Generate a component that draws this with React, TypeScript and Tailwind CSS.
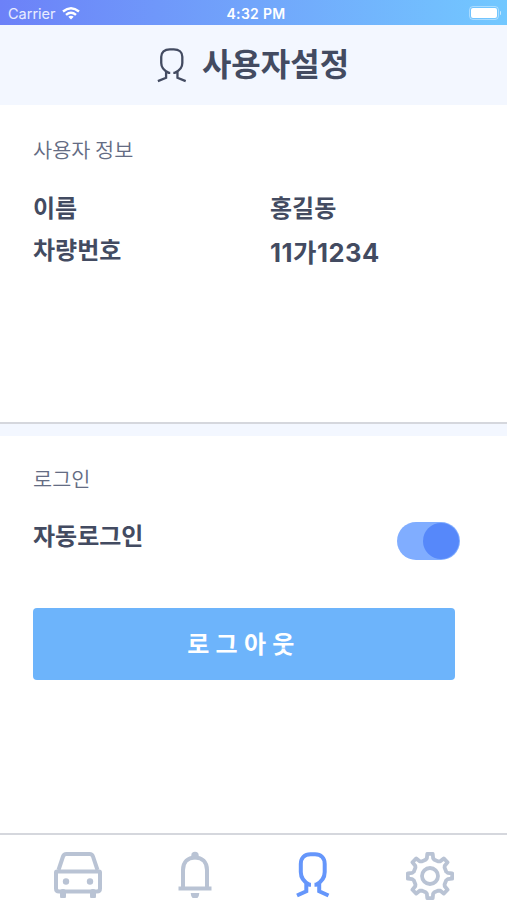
import { useState } from "react";

const PersonIcon = ({ className }: { className?: string }) => (
  <svg viewBox="0 0 34 48" preserveAspectRatio="none" fill="none" stroke="currentColor" className={className}>
    <path
      vectorEffect="non-scaling-stroke"
      d="M15 34.800H13.500C8 32 4.800 27.500 4.800 22V14C4.800 8 8.500 4.300 14.500 4.300H19C25 4.300 28.700 8 28.700 14V22C28.700 27.500 25.500 32 20 34.800H18.500M10.300 33.500V41.300L1 45.500M23.200 33.500V41.300L32.500 45.500"
    />
  </svg>
);

const CarIcon = () => (
  <svg viewBox="0 0 48 48" fill="none" stroke="currentColor" strokeWidth="4" className="h-12 w-12">
    <path d="M4.500 20L9 6.500Q9.800 4 12.500 4H35.500Q38.200 4 39 6.500L43.500 20" />
    <path d="M3 21.500H45Q46 21.500 46 22.500V38.500Q46 41.500 43 41.500H5Q2 41.500 2 38.500V22.500Q2 21.500 3 21.500Z" />
    <path d="M9 42V46M39 42V46" strokeWidth="6" strokeLinecap="round" />
    <circle cx="12" cy="31.500" r="3.200" fill="currentColor" stroke="none" />
    <circle cx="36" cy="31.500" r="3.200" fill="currentColor" stroke="none" />
  </svg>
);

const BellIcon = () => (
  <svg viewBox="0 0 34 48" fill="none" stroke="currentColor" strokeWidth="4" className="h-12 w-[34px]">
    <path d="M5 39V20C5 12 10 7.500 17 7.500S29 12 29 20V39M0.500 38.500H33.500" />
    <circle cx="17" cy="5.500" r="3.700" fill="currentColor" stroke="none" />
    <path d="M12.700 43H21.300Q21 48.800 17 48.800T12.700 43Z" fill="currentColor" stroke="none" />
  </svg>
);

// one tooth as [radius, angle], repeated eight times round the hub
const tooth = [
  [16.800, -15],
  [18, -10],
  [22.300, -7],
  [22.300, 7],
  [18, 10],
  [16.800, 15],
];

const gearPoints = Array.from({ length: 8 }, (_, i) =>
  tooth.map(([r, deg]) => {
    const a = ((deg + i * 45 - 90) * Math.PI) / 180;
    return `${(24 + r * Math.cos(a)).toFixed(2)},${(24 + r * Math.sin(a)).toFixed(2)}`;
  }).join(" ")
).join(" ");

const GearIcon = () => (
  <svg viewBox="0 0 48 48" fill="none" stroke="currentColor" strokeWidth="3.800" strokeLinejoin="round" className="h-12 w-12">
    <polygon points={gearPoints} />
    <circle cx="24" cy="24" r="8" />
  </svg>
);

const StatusBar = () => (
  <div className="grid h-[25px] shrink-0 grid-cols-3 items-center bg-linear-to-r from-[#6c81f8] via-[#71a5fb] to-[#72c8ff] pt-[3px] font-['Inter'] text-[14px] leading-none text-white">
    <div className="flex items-center gap-1.5 pl-2">
      <span className="text-[14.500px] text-white/85">Carrier</span>
      <svg viewBox="0 0 18 13" fill="none" stroke="currentColor" strokeWidth="2.400" className="-mt-0.5 h-[13px] w-[18px]">
        <path d="M1 4.500Q9-2 17 4.500M4 7.800Q9 3.600 14 7.800" />
        <path d="M9 12.500L6.300 9.700Q9 7.600 11.700 9.700Z" fill="currentColor" stroke="none" />
      </svg>
    </div>
    <span className="pl-[5px] text-center font-semibold tracking-[0.300px]">4:32 PM</span>
    <div className="flex items-center justify-end gap-px pr-1.5">
      <div className="-mt-[3px] h-[14px] w-[30px] rounded-[4px] border border-white/40 p-px">
        <div className="h-full rounded-[2px] bg-white" />
      </div>
      <div className="-mt-[3px] h-1 w-px rounded-r bg-white/60" />
    </div>
  </div>
);

export default function App() {
  const [autoLogin, setAutoLogin] = useState(true);

  return (
    <div className="flex h-[900px] w-[507px] flex-col overflow-hidden bg-white font-['Noto_Sans_CJK_KR',sans-serif] text-[#434b61]">
      <StatusBar />

      <header className="flex h-20 shrink-0 items-center justify-center gap-[15px] bg-[#f3f7ff]">
        <PersonIcon className="mb-px h-[37px] w-[30px] stroke-[2.300]" />
        <h1 className="pr-px pb-[6px] text-[32px] leading-none font-bold">사용자설정</h1>
      </header>

      <section className="h-[319px] shrink-0 border-b-2 border-[#d5d7dd] px-[33px] pt-[29px]">
        <h2 className="text-[20.800px] leading-[30px] font-[350] text-[#646c83]">사용자 정보</h2>
        <dl className="mt-[22px] grid grid-cols-[237px_1fr] text-2xl leading-[42px] font-bold">
          <dt>이름</dt>
          <dd>홍길동</dd>
          <dt>차량번호</dt>
          <dd className="pt-1 font-['Inter','Noto_Sans_CJK_KR',sans-serif] text-[25.500px] tracking-[0.500px]">11가1234</dd>
        </dl>
      </section>

      <div className="h-3 shrink-0 bg-[#f3f7ff]" />

      <section className="flex-1 px-[33px] pt-[27px]">
        <h2 className="text-[20.800px] leading-[30px] font-[350] text-[#646c83]">로그인</h2>
        <div className="mt-6 flex items-start justify-between pr-[14px]">
          <span className="text-2xl leading-[36px] font-bold">자동로그인</span>
          <button
            type="button"
            role="switch"
            aria-checked={autoLogin}
            aria-label="자동로그인"
            onClick={() => setAutoLogin(!autoLogin)}
            className={`mt-[5px] flex h-[38px] w-[63px] items-center rounded-full p-px ${
              autoLogin ? "justify-end bg-[#80adff]" : "justify-start bg-[#ccd3e0]"
            }`}
          >
            <span className="size-9 rounded-full bg-[#5688fa]" />
          </button>
        </div>
        <button type="button" className="mt-[48px] h-[72px] w-[422px] rounded-[4px] bg-[#6db4fb] pb-0.5 text-2xl font-bold tracking-[6.300px] text-white">
          로그아웃
        </button>
      </section>

      <nav className="flex h-[67px] shrink-0 items-start border-t-2 border-[#d5d7dd] pt-[15px] pl-[54px] text-[#b9c3d4]">
        <CarIcon />
        <div className="ml-[76px]"><BellIcon /></div>
        <div className="ml-[84px] text-[#6596fb]"><PersonIcon className="h-12 w-[34px] stroke-[4]" /></div>
        <div className="mt-0.5 ml-[76px]"><GearIcon /></div>
      </nav>
    </div>
  );
}
